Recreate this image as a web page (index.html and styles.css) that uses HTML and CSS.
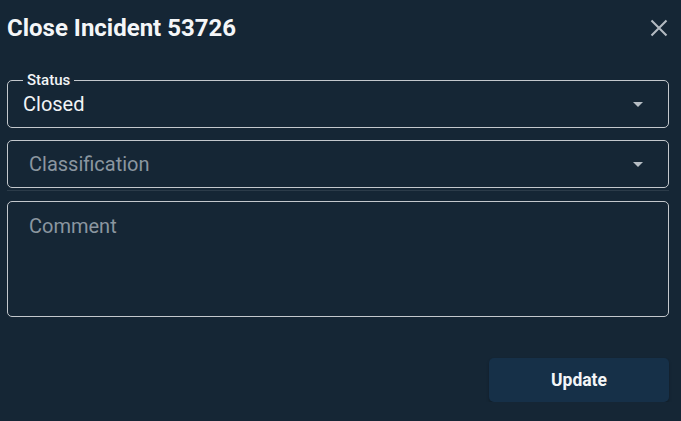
FILE: index.html
```html
<!DOCTYPE html>
<html lang="en">
<head>
<meta charset="utf-8">
<title>Close Incident 53726</title>
<link rel="stylesheet" href="styles.css">
</head>
<body>
<div class="dialog">
  <div class="header">
    <h2 class="title">Close Incident 53726</h2>
    <button class="close" aria-label="Close">
      <svg width="18" height="18" viewBox="0 0 18 18"><path d="M1.5 1.5 L16.5 16.5 M16.5 1.5 L1.5 16.5" stroke="#b3bac1" stroke-width="2.1" fill="none"/></svg>
    </button>
  </div>
  <div class="fields">
    <div class="field select">
      <span class="label">Status</span>
      <span class="value">Closed</span>
      <span class="arrow"></span>
    </div>
    <div class="field select gap">
      <span class="value placeholder">Classification</span>
      <span class="arrow"></span>
    </div>
    <div class="divider"></div>
    <div class="field textarea">
      <span class="value placeholder">Comment</span>
    </div>
  </div>
  <div class="actions">
    <button class="update">Update</button>
  </div>
</div>
</body>
</html>
```
FILE: styles.css
```css
html, body {
  margin: 0;
  padding: 0;
  background: #152635;
  font-family: Roboto, "Open Sans", sans-serif;
}
.dialog {
  padding: 0 12px 0 7px;
}
.header {
  height: 56px;
  display: flex;
  align-items: center;
  justify-content: space-between;
}
.title {
  margin: 0;
  font-size: 24px;
  line-height: 30px;
  font-weight: 700;
  color: #f4f6f8;
}
.close {
  background: none;
  border: 0;
  padding: 0;
  margin-right: 1px;
  width: 18px;
  height: 18px;
  display: flex;
}
.fields {
  margin-top: 24px;
  display: flex;
  flex-direction: column;
}
.field {
  position: relative;
  box-sizing: border-box;
  border: 1px solid #c3c8cd;
  border-radius: 5px;
  display: flex;
}
.select {
  height: 48px;
  align-items: center;
  padding: 0 25px 0 15px;
}
.gap {
  margin-top: 12px;
}
.label {
  position: absolute;
  top: -8px;
  left: 15px;
  padding: 0 4px;
  background: #152635;
  font-size: 15px;
  line-height: 15px;
  font-weight: 500;
  color: #f2f4f6;
}
.value {
  flex: 1;
  font-size: 20px;
  line-height: 24px;
  color: #f2f4f6;
}
.placeholder {
  color: #8b96a0;
  padding-left: 6px;
}
.arrow {
  width: 0;
  height: 0;
  border-left: 5px solid transparent;
  border-right: 5px solid transparent;
  border-top: 5px solid #b6bdc4;
  margin-top: 1px;
}
.divider {
  margin-top: 2px;
  height: 1px;
  background: #2b3b49;
}
.textarea {
  margin-top: 10px;
  height: 116px;
  align-items: flex-start;
  padding: 12px 14px 0 15px;
}
.actions {
  display: flex;
  justify-content: flex-end;
  margin-top: 41px;
}
.update {
  width: 180px;
  height: 44px;
  border: 0;
  border-radius: 5px;
  background: #163048;
  color: #f4f6f8;
  font-family: Roboto, sans-serif;
  font-size: 17.5px;
  font-weight: 700;
  box-shadow: 0 2px 3px rgba(0, 0, 0, 0.25);
}
```
